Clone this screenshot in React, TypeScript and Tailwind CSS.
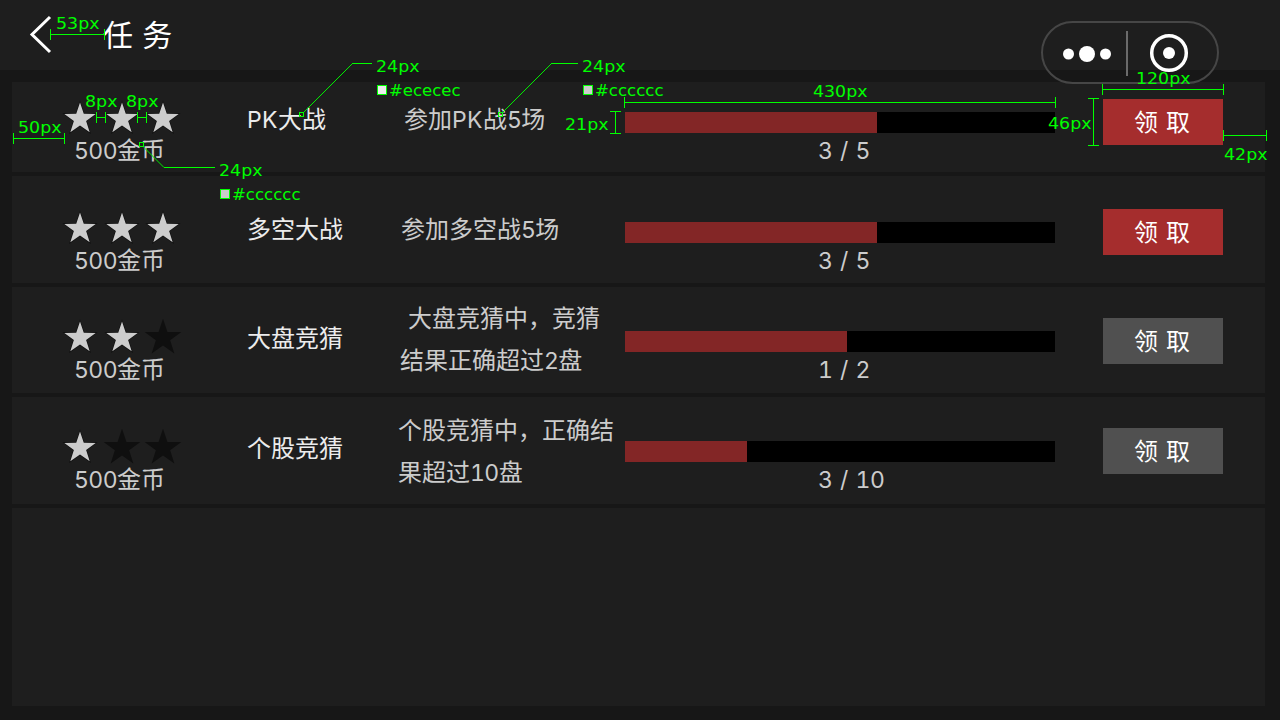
import React from "react";

type Task = {
  reward: string;
  stars: number;
  name: string;
  desc: string[];
  descClass: string;
  firstLineClass: string;
  done: number;
  progress: string;
  ready: boolean;
  rowClass: string;
};

const tasks: Task[] = [
  { reward: "500金币", stars: 3, name: "PK大战", desc: ["参加PK战5场"], descClass: "pt-[17px] pl-[6px]", firstLineClass: "", done: 252, progress: "3 / 5", ready: true, rowClass: "h-[90px]" },
  { reward: "500金币", stars: 3, name: "多空大战", desc: ["参加多空战5场"], descClass: "pt-[17px] pl-[3px]", firstLineClass: "", done: 252, progress: "3 / 5", ready: true, rowClass: "h-[107px] pt-[16px]" },
  { reward: "500金币", stars: 2, name: "大盘竞猜", desc: ["大盘竞猜中，竞猜", "结果正确超过2盘"], descClass: "-mt-[3px] pl-[2px]", firstLineClass: "pl-[8px]", done: 222, progress: "1 / 2", ready: false, rowClass: "h-[106px] pt-[14px]" },
  { reward: "500金币", stars: 1, name: "个股竞猜", desc: ["个股竞猜中，正确结", "果超过10盘"], descClass: "-mt-[1px]", firstLineClass: "", done: 122, progress: "3 / 10", ready: false, rowClass: "h-[107px] pt-[14px]" },
];

function runClass(run: string) {
  if (/^[0-9]/.test(run)) return "font-['Inter',sans-serif] text-[23px] leading-none tabular-nums tracking-[-0.6px]";
  if (/^[A-Z]/.test(run)) return "font-['Inter',sans-serif] text-[23px] leading-none tracking-[0.4px]";
  return "";
}

function Mixed({ text }: { text: string }) {
  const runs = text.match(/[\x21-\x7e]+|[^\x21-\x7e]+/g) ?? [];
  return (
    <>
      {runs.map((r, i) => (
        <span key={i} className={runClass(r)}>{r}</span>
      ))}
    </>
  );
}

function starPoints(cx: number, cy: number, r: number) {
  return Array.from({ length: 10 }, (_, i) => {
    const a = -Math.PI / 2 + (i * Math.PI) / 5;
    const d = i % 2 ? r * 0.39 : r;
    return `${(cx + d * Math.cos(a)).toFixed(2)},${(cy + d * Math.sin(a)).toFixed(2)}`;
  }).join(" ");
}

function Stars({ lit }: { lit: number }) {
  return (
    <svg className="block" width="126" height="40" viewBox="0 0 126 40">
      {[20, 62, 103].map((x, i) => (
        <g key={x}>
          <polygon points={starPoints(x, 20, i < lit ? 18.5 : 19.3)} fill="#0f0f0f" />
          {i < lit && <polygon points={starPoints(x, 20, 16.5)} fill="#cccccc" />}
        </g>
      ))}
    </svg>
  );
}

function Row({ task }: { task: Task }) {
  return (
    <div className={`shrink-0 bg-[#1e1e1e] ${task.rowClass}`}>
      <div className="flex items-start text-[24px] leading-[42px] text-[#cccccc]">
        <div className="w-[235px] pt-[17px] pl-[48px]">
          <Stars lit={task.stars} />
          <div className="-mt-[9px] pl-[14px]"><Mixed text={task.reward} /></div>
        </div>
        <div className="w-[151px] pt-[17px] text-[#ececec]"><Mixed text={task.name} /></div>
        <div className={`w-[227px] whitespace-nowrap ${task.descClass}`}>
          {task.desc.map((d, i) => (
            <div key={d} className={i === 0 ? task.firstLineClass : ""}><Mixed text={d} /></div>
          ))}
        </div>
        <div className="w-[478px] pt-[30px]">
          <div className="h-[21px] w-[430px] bg-black">
            <div className="h-full bg-[#832626]" style={{ width: task.done }} />
          </div>
          <div className="-mt-[3px] pl-[193px] font-['Inter',sans-serif] text-[23px] tabular-nums tracking-[-0.4px] [word-spacing:1.8px]">{task.progress}</div>
        </div>
        <button className={`mt-[17px] flex h-[46px] w-[120px] items-center justify-center pt-[2px] pr-[2px] text-white [word-spacing:1.5px] ${task.ready ? "bg-[#a52d2d]" : "bg-[#505050]"}`}>
          领 取
        </button>
      </div>
    </div>
  );
}

const notes: [string, number, number, number][] = [
  ["53px", 56, 29, 43.5],
  ["8px", 85, 107, 32.5],
  ["8px", 126, 107, 32.5],
  ["50px", 18, 133, 43.5],
  ["24px", 219, 176, 43.5],
  ["#cccccc", 232, 200, 68.5],
  ["24px", 376, 72, 43.5],
  ["#ececec", 389, 96, 71.5],
  ["24px", 582, 72, 43.5],
  ["#cccccc", 595, 96, 68.5],
  ["21px", 565, 130, 43.5],
  ["430px", 813, 97, 54.5],
  ["46px", 1048, 129, 43.5],
  ["120px", 1136, 84, 54.5],
  ["42px", 1224, 160, 43.5],
];

function Annotations() {
  return (
    <svg className="pointer-events-none absolute inset-0" width="1280" height="720" viewBox="0 0 1280 720">
      <g stroke="#00ff00" fill="none" shapeRendering="crispEdges">
        <path d="M50.5 29v11M50 34.5h55M104.5 29v11" />
        <path d="M96.5 112v11M96 117.5h10M105.5 112v11" />
        <path d="M137.5 112v11M137 117.5h10M146.5 112v11" />
        <path d="M13.5 133v11M13 138.5h52M64.5 133v11" />
        <path d="M164 167.5h51" />
        <path d="M352 63.5h20M551 63.5h27" />
        <path d="M139.5 142.5h4v4h-4zM299.5 112.5h4v4h-4zM498.5 112.5h4v4h-4z" />
        <path d="M610 111.5h11M615.5 111v23M610 133.5h11" />
        <path d="M624.5 97v11M624 102.5h432M1055.5 97v11" />
        <path d="M1102.5 84v11M1102 89.5h122M1223.5 84v11" />
        <path d="M1088 98.5h11M1093.5 98v48M1088 145.5h11" />
        <path d="M1223.5 130v11M1223 135.5h44M1266.5 130v11" />
      </g>
      <path d="M144 147.5L164 167.5M304 112L352.500 63.500M503 112L551.500 63.500" stroke="#00ee00" strokeWidth="1" fill="none" />
      <g stroke="#00ff00" shapeRendering="crispEdges">
        <rect x="220.500" y="189.500" width="9" height="9" fill="#cccccc" />
        <rect x="377.500" y="85.500" width="9" height="9" fill="#ececec" />
        <rect x="583.500" y="85.500" width="9" height="9" fill="#cccccc" />
      </g>
      <g fill="#00ff00" fontFamily="'DejaVu Sans', sans-serif" fontSize="16.5">
        {notes.map(([label, x, y, w]) => (
          <text key={`${x}-${y}`} x={x} y={y} textLength={w} lengthAdjust="spacingAndGlyphs">{label}</text>
        ))}
      </g>
    </svg>
  );
}

export default function App() {
  return (
    <div className="relative flex h-[720px] w-[1280px] flex-col overflow-hidden bg-[#171717] font-['Liberation_Sans','Noto_Sans_CJK_SC',sans-serif]">
      <header className="flex h-[70px] shrink-0 items-start bg-[#1e1e1e] pl-[28px] text-white">
        <svg className="mt-[14px] block" width="26" height="42" viewBox="0 0 26 42" fill="none" stroke="white" strokeWidth="3">
          <path d="M22 3L4 20.500L22 38" />
        </svg>
        <h1 className="mt-[15px] pl-[49px] text-[30px] leading-[42px] [word-spacing:1px]">任 务</h1>
      </header>
      <main className="mt-[12px] ml-[12px] flex w-[1253px] flex-col gap-[4px]">
        {tasks.map((t) => <Row key={t.name} task={t} />)}
        <div className="h-[198px] bg-[#1e1e1e]" />
      </main>
      <div className="absolute top-[21px] left-[1041px] flex h-[63px] w-[178px] items-center rounded-full border-2 border-[#464646]">
        <svg className="block" width="174" height="59" viewBox="1043 23 174 59">
          <g fill="white">
            <circle cx="1068.500" cy="54" r="5.500" />
            <circle cx="1087" cy="54" r="8" />
            <circle cx="1105.500" cy="54" r="5.500" />
            <circle cx="1169" cy="53" r="6" />
          </g>
          <path d="M1127 31v45" stroke="#6b6b6b" strokeWidth="2" />
          <circle cx="1169" cy="53" r="17.300" fill="none" stroke="white" strokeWidth="3.500" />
        </svg>
      </div>
      <Annotations />
    </div>
  );
}
